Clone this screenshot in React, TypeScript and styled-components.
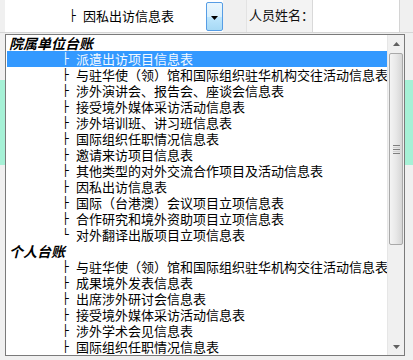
import React from 'react';
import styled, { createGlobalStyle } from 'styled-components';

const GlobalStyle = createGlobalStyle`
  html, body {
    margin: 0;
    padding: 0;
    background: #f0f0f0;
    width: 413px;
    height: 360px;
    overflow: hidden;
  }
  body {
    font-family: "Noto Sans CJK SC", "Noto Sans", sans-serif;
    font-size: 13px;
    color: #000;
  }
`;

type Entry = { kind: 'group' | 'item'; text: string; last?: boolean; selected?: boolean };

const entries: Entry[] = [
  { kind: 'group', text: '院属单位台账' },
  { kind: 'item', text: '派遣出访项目信息表', selected: true },
  { kind: 'item', text: '与驻华使（领）馆和国际组织驻华机构交往活动信息表' },
  { kind: 'item', text: '涉外演讲会、报告会、座谈会信息表' },
  { kind: 'item', text: '接受境外媒体采访活动信息表' },
  { kind: 'item', text: '涉外培训班、讲习班信息表' },
  { kind: 'item', text: '国际组织任职情况信息表' },
  { kind: 'item', text: '邀请来访项目信息表' },
  { kind: 'item', text: '其他类型的对外交流合作项目及活动信息表' },
  { kind: 'item', text: '因私出访信息表' },
  { kind: 'item', text: '国际（台港澳）会议项目立项信息表' },
  { kind: 'item', text: '合作研究和境外资助项目立项信息表' },
  { kind: 'item', text: '对外翻译出版项目立项信息表', last: true },
  { kind: 'group', text: '个人台账' },
  { kind: 'item', text: '与驻华使（领）馆和国际组织驻华机构交往活动信息表' },
  { kind: 'item', text: '成果境外发表信息表' },
  { kind: 'item', text: '出席涉外研讨会信息表' },
  { kind: 'item', text: '接受境外媒体采访活动信息表' },
  { kind: 'item', text: '涉外学术会见信息表' },
  { kind: 'item', text: '国际组织任职情况信息表' },
];

/* page behind the popup */
const Page = styled.div`
  position: relative;
  width: 413px;
  height: 360px;
  display: flex;
  flex-direction: column;
`;

const Toolbar = styled.div`
  height: 33px;
  display: flex;
  align-items: stretch;
  box-sizing: border-box;
  border-bottom: 1px solid #d6d6d6;
`;

const Combo = styled.div`
  margin-left: 5px;
  width: 218px;
  display: flex;
  background: #fff;
  padding: 2px 0 1px 0;
  box-sizing: border-box;
`;

const ComboValue = styled.div`
  flex: 1;
  display: flex;
  align-items: center;
  padding-left: 65px;
  padding-bottom: 2px;
  white-space: nowrap;
`;

const ComboButton = styled.div`
  width: 17px;
  box-sizing: border-box;
  border: 1px solid #569de5;
  border-radius: 2px;
  background: linear-gradient(#eaf6fd, #d9f0fc 50%, #bee6fd 51%, #a7d9f5);
  display: flex;
  align-items: center;
  justify-content: center;
  padding-top: 3px;
`;

const LabelCell = styled.div`
  margin-left: 23px;
  width: 67px;
  box-sizing: border-box;
  border-left: 1px solid #e3e3e3;
  border-right: 1px solid #d9d9d9;
  background: #f3f3f3;
  display: flex;
  align-items: center;
  padding: 0 0 3px 2px;
  white-space: nowrap;
  color: #111;
`;

const NameInput = styled.div`
  width: 86px;
  background: #fff;
  border-right: 1px solid #d4d4d4;
`;

const Content = styled.div`
  flex: 1;
  display: flex;
  flex-direction: column;
  padding-top: 47px;
`;

const Band = styled.div`
  height: 85px;
  background: #a6f1d6;
`;

/* dropdown popup */
const Popup = styled.div`
  position: absolute;
  left: 5px;
  top: 34px;
  width: 400px;
  height: 322px;
  box-sizing: border-box;
  border: 1px solid #7a7a7a;
  background: #fff;
  display: flex;
  overflow: hidden;
`;

const List = styled.div`
  flex: 1;
  display: flex;
  flex-direction: column;
  overflow: hidden;
`;

const Row = styled.div<{ $group?: boolean; $selected?: boolean }>`
  height: 16px;
  flex: none;
  display: flex;
  align-items: center;
  white-space: nowrap;
  box-sizing: border-box;
  padding-left: ${p => (p.$group ? '2px' : '56px')};
  margin-left: 1px;
  background: ${p => (p.$selected ? '#3399ff' : 'transparent')};
  color: ${p => (p.$selected ? '#f2f8ff' : '#000')};
`;

const Label = styled.span<{ $group?: boolean }>`
  line-height: 16px;
  padding-right: 4px;
  font-size: ${p => (p.$group ? '14px' : '13px')};
  font-weight: ${p => (p.$group ? 700 : 400)};
  font-style: ${p => (p.$group ? 'italic' : 'normal')};
`;

const Branch = styled.span`
  width: 14px;
  flex: none;
  font-family: "DejaVu Sans", sans-serif;
  font-size: 11px;
  line-height: 16px;
  margin-left: -1px;
`;

const Scrollbar = styled.div`
  width: 16px;
  flex: none;
  background: #f0f0f0;
  border-left: 1px solid #e6e6e6;
  display: flex;
  flex-direction: column;
`;

const ScrollButton = styled.div`
  height: 17px;
  flex: none;
  display: flex;
  align-items: center;
  justify-content: center;
`;

const Thumb = styled.div`
  margin: 1px 1px 0 1px;
  height: 192px;
  flex: none;
  box-sizing: border-box;
  border: 1px solid #a9a9a9;
  border-radius: 2px;
  background: linear-gradient(90deg, #f4f4f4, #e8e8e8 50%, #d6d6d6);
  display: flex;
  align-items: center;
  justify-content: center;
`;

const Track = styled.div`
  flex: 1;
`;

const Arrow = ({ up, color }: { up?: boolean; color: string }) => (
  <svg width="7" height="4" viewBox="0 0 7 4">
    <path d={up ? 'M0 4 L3.5 0 L7 4 Z' : 'M0 0 L7 0 L3.5 4 Z'} fill={color} />
  </svg>
);

const Grip = () => (
  <svg width="7" height="9" viewBox="0 0 7 9">
    {[0, 2, 4, 6, 8].map(y => (
      <rect key={y} x="0" y={y} width="7" height="1" fill={y % 4 === 0 ? '#7f7f7f' : '#cfcfcf'} />
    ))}
  </svg>
);

export default function App() {
  return (
    <>
      <GlobalStyle />
      <Page>
        <Toolbar>
          <Combo>
            <ComboValue>
              <Branch>├</Branch>因私出访信息表
            </ComboValue>
            <ComboButton>
              <Arrow color="#000" />
            </ComboButton>
          </Combo>
          <LabelCell>人员姓名：</LabelCell>
          <NameInput />
        </Toolbar>
        <Content>
          <Band />
        </Content>

        <Popup>
          <List>
            {entries.map((e, i) =>
              e.kind === 'group' ? (
                <Row key={i} $group>
                  <Label $group>{e.text}</Label>
                </Row>
              ) : (
                <Row key={i} $selected={e.selected}>
                  <Branch>{e.last ? '└' : '├'}</Branch>
                  <Label>{e.text}</Label>
                </Row>
              )
            )}
          </List>
          <Scrollbar>
            <ScrollButton>
              <Arrow up color="#606060" />
            </ScrollButton>
            <Thumb>
              <Grip />
            </Thumb>
            <Track />
            <ScrollButton>
              <Arrow color="#606060" />
            </ScrollButton>
          </Scrollbar>
        </Popup>
      </Page>
    </>
  );
}
